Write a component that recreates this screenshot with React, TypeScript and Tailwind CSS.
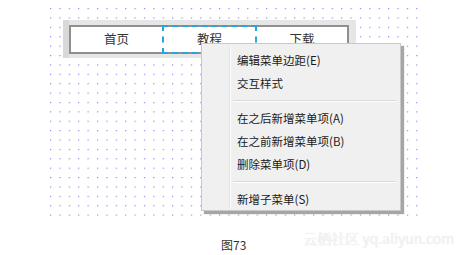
import React from 'react'

const font = { fontFamily: '"Noto Sans CJK SC", "Noto Sans", sans-serif' }

function MenuItem({ label }: { label: string }) {
  return (
    <div className="h-[23px] flex items-center pl-[35px] text-[11.5px] text-[#1a1a1a]">
      {label}
    </div>
  )
}

function Separator() {
  return (
    <div className="h-[12px] pt-[5px] pl-[31px] pr-[4px]">
      <div className="h-px bg-[#d9d9d9]" />
      <div className="h-px bg-white" />
    </div>
  )
}

export default function App() {
  return (
    <div className="w-[470px] h-[255px] bg-white relative overflow-hidden" style={font}>
      {/* Canvas with dotted grid */}
      <div className="ml-[50px] mt-[8px] w-[368px] h-[208px] pt-[12px] pl-[13px] bg-[radial-gradient(circle_at_0.5px_0.5px,#8787f8_0.7px,transparent_1px)] bg-size-[9.4px_9.4px]">
        {/* Menu bar */}
        <div className="w-[293px] h-[38px] bg-[#e6e6e6] flex">
          <div className="w-[6px] h-full bg-[#d9d9d9]" />
          <div className="mt-[5px] h-[29px] w-[280px] bg-white border-2 border-[#8f8f8f] flex text-[12.5px] text-[#333]">
            <div className="w-[91px] flex items-center justify-center">首页</div>
            <div className="w-[95px] -my-[2px] border-2 border-dashed border-[#27a4de] flex items-center justify-center">
              教程
            </div>
            <div className="flex-1 flex items-center justify-center">下载</div>
          </div>
        </div>
      </div>

      {/* Context menu */}
      <div className="absolute left-[201px] top-[43px] w-[200px] h-[168px] bg-[#f0f0f0] border border-[#c8c8c8] shadow-[3px_3px_1px_rgba(0,0,0,0.35)] pt-[5px]">
        <div className="absolute left-[27px] top-[2px] bottom-[2px] w-px bg-[#e2e2e2]" />
        <div className="absolute left-[28px] top-[2px] bottom-[2px] w-px bg-white" />
        <div className="relative">
          <MenuItem label="编辑菜单边距(E)" />
          <MenuItem label="交互样式" />
          <Separator />
          <MenuItem label="在之后新增菜单项(A)" />
          <MenuItem label="在之前新增菜单项(B)" />
          <MenuItem label="删除菜单项(D)" />
          <Separator />
          <MenuItem label="新增子菜单(S)" />
        </div>
      </div>

      {/* Caption */}
      <div className="mt-[20px] flex">
        <div className="ml-[221px] text-[12px] text-[#333]">图73</div>
        <div className="ml-[57px] -mt-[8px] text-[14px] text-[#f4f4f4] [text-shadow:0_0_1px_#dedede]">
          云栖社区 yq.aliyun.com
        </div>
      </div>
    </div>
  )
}
